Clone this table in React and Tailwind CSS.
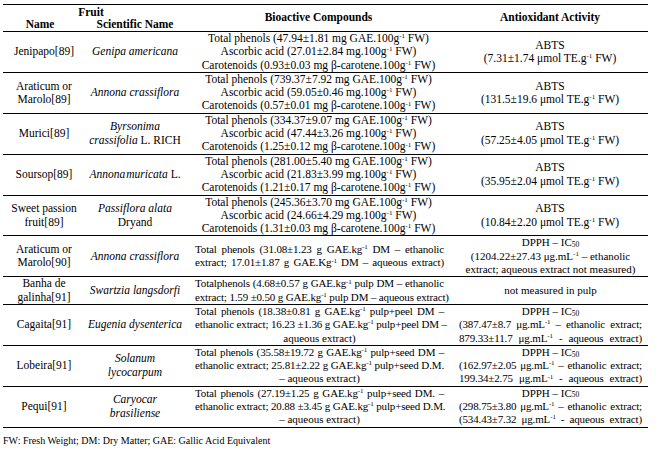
import React from 'react';

// superscript / subscript helpers
const Sup = ({ children = '-1' }) => <sup className="text-[7px] top-[-0.55em]">{children}</sup>;
const Ic = () => (
  <>
    DPPH – IC<sub className="text-[7.5px] bottom-[-0.1em]">50</sub>
  </>
);

// centred lines (rows 1-5)
const phenolRows = [
  {
    name: ['Jenipapo[89]'],
    sci: [<i key="a">Genipa americana</i>],
    tp: '47.94±1.81',
    aa: '27.01±2.84',
    car: '0.93±0.03',
    abts: '(7.31±1.74',
  },
  {
    name: ['Araticum or', 'Marolo[89]'],
    sci: [<i key="a">Annona crassiflora</i>],
    tp: '739.37±7.92',
    aa: '59.05±0.46',
    car: '0.57±0.01',
    abts: '(131.5±19.6',
  },
  {
    name: ['Murici[89]'],
    sci: [
      <i key="a">Byrsonima</i>,
      <span key="b">
        <i>crassifolia</i> L. RICH
      </span>,
    ],
    tp: '334.37±9.07',
    aa: '47.44±3.26',
    car: '1.25±0.12',
    abts: '(57.25±4.05',
  },
  {
    name: ['Soursop[89]'],
    sci: [
      <span key="a">
        <i>Annona</i>
        <i className="ml-[1px]">muricata</i> L.
      </span>,
    ],
    tp: '281.00±5.40',
    aa: '21.83±3.99',
    car: '1.21±0.17',
    abts: '(35.95±2.04',
  },
  {
    name: ['Sweet passion', 'fruit[89]'],
    sci: [<i key="a">Passiflora alata</i>, 'Dryand'],
    tp: '245.36±3.70',
    aa: '24.66±4.29',
    car: '1.31±0.03',
    abts: '(10.84±2.20',
  },
];

// justified rows (6-10); each line: [text, full?]
const extractRows = [
  {
    name: ['Araticum or', 'Marolo[90]'],
    sci: [<i key="a">Annona crassiflora</i>],
    bio: [
      [<>Total phenols (31.08±1.23 g GAE.kg<Sup /> DM – ethanolic</>, true],
      [<>extract; 17.01±1.87 g GAE.Kg<Sup /> DM – aqueous extract)</>, true],
    ],
    anti: [
      [<Ic />, false],
      [<>(1204.22±27.43 μg.mL<Sup /> – ethanolic</>, false],
      [<>extract; aqueous extract not measured)</>, false],
    ],
  },
  {
    name: ['Banha de', 'galinha[91]'],
    sci: [<i key="a">Swartzia langsdorfi</i>],
    bio: [
      [<>Totalphenols (4.68±0.57 g GAE.kg<Sup /> pulp DM – ethanolic</>, true],
      [<>extract; 1.59 ±0.50 g GAE.kg<Sup /> pulp DM – aqueous extract)</>, true],
    ],
    anti: [[<>not measured in pulp</>, false]],
  },
  {
    name: ['Cagaita[91]'],
    sci: [<i key="a">Eugenia dysenterica</i>],
    bio: [
      [<>Total phenols (18.38±0.81 g GAE.kg<Sup /> pulp+peel DM –</>, true],
      [<>ethanolic extract; 16.23 ±1.36 g GAE.kg<Sup /> pulp+peel DM –</>, true],
      [<>aqueous extract)</>, false],
    ],
    anti: [
      [<Ic />, false],
      [<>(387.47±8.7 μg.mL<Sup /> – ethanolic extract;</>, true],
      [<>879.33±11.7 μg.mL<Sup /> - aqueous extract)</>, true],
    ],
  },
  {
    name: ['Lobeira[91]'],
    sci: [<i key="a">Solanum</i>, <i key="b">lycocarpum</i>],
    bio: [
      [<>Total phenols (35.58±19.72 g GAE.kg<Sup /> pulp+seed DM –</>, true],
      [<>ethanolic extract; 25.81±2.22 g GAE.kg<Sup /> pulp+seed D.M.</>, true],
      [<>– aqueous extract)</>, false],
    ],
    anti: [
      [<Ic />, false],
      [<>(162.97±2.05 μg.mL<Sup /> – ethanolic extract;</>, true],
      [<>199.34±2.75 μg.mL<Sup /> - aqueous extract)</>, true],
    ],
  },
  {
    name: ['Pequi[91]'],
    sci: [<i key="a">Caryocar</i>, <i key="b">brasiliense</i>],
    bio: [
      [<>Total phenols (27.19±1.25 g GAE.kg<Sup /> pulp+seed DM. –</>, true],
      [<>ethanolic extract; 20.88 ±3.45 g GAE.kg<Sup /> pulp+seed D.M.</>, true],
      [<>– aqueous extract)</>, false],
    ],
    anti: [
      [<Ic />, false],
      [<>(298.75±3.80 μg.mL<Sup /> – ethanolic extract;</>, true],
      [<>(534.43±7.32 μg.mL<Sup /> - aqueous extract)</>, true],
    ],
  },
];

const Lines = ({ lines }) => lines.map((l, i) => <div key={i}>{l}</div>);

const JLines = ({ lines }) =>
  lines.map(([l, full], i) => (
    <div
      key={i}
      className={
        full
          ? 'whitespace-nowrap text-justify [text-align-last:justify] text-[11px] tracking-[-0.15px]'
          : 'whitespace-nowrap text-center text-[11px]'
      }
    >
      {l}
    </div>
  ));

export default function App() {
  return (
    <div className="w-[660px] h-[451px] bg-white text-black font-['Liberation_Serif',serif] overflow-hidden">
      <div className="pt-[3.5px] pl-[3px]">
        <table className="w-[645px] table-fixed text-[11.5px] leading-[13.3px]">
          <colgroup>
            <col className="w-[82px]" />
            <col className="w-[100px]" />
            <col className="w-[267px]" />
            <col className="w-[196px]" />
          </colgroup>
          <thead className="font-bold">
            <tr className="border-t-[1.5px] border-black">
              <th colSpan={2} className="text-center font-bold leading-[12.5px] pt-[1px] pr-[6px]">
                Fruit
              </th>
              <th rowSpan={2} className="text-center align-middle font-bold">
                Bioactive Compounds
              </th>
              <th rowSpan={2} className="text-center align-middle font-bold">
                Antioxidant Activity
              </th>
            </tr>
            <tr className="border-b border-black">
              <th className="text-center font-bold leading-[13px] pr-[8px]">Name</th>
              <th className="text-center font-bold leading-[13px]">Scientific Name</th>
            </tr>
          </thead>
          <tbody>
            {phenolRows.map((r, i) => (
              <tr key={i} className="border-b border-black">
                <td className="text-center align-middle">
                  <Lines lines={r.name} />
                </td>
                <td className="text-center align-middle">
                  <Lines lines={r.sci} />
                </td>
                <td className="text-center align-middle">
                  <div>
                    Total phenols ({r.tp} mg GAE.100g<Sup /> FW)
                  </div>
                  <div>
                    Ascorbic acid ({r.aa} mg.100g<Sup /> FW)
                  </div>
                  <div>
                    Carotenoids ({r.car} mg β-carotene.100g<Sup /> FW)
                  </div>
                </td>
                <td className="text-center align-middle">
                  <div>ABTS</div>
                  <div>
                    {r.abts} μmol TE.g<Sup /> FW)
                  </div>
                </td>
              </tr>
            ))}
            {extractRows.map((r, i) => (
              <tr
                key={i}
                className={
                  i === extractRows.length - 1
                    ? 'border-b-[1.5px] border-black'
                    : 'border-b border-black'
                }
              >
                <td className="text-center align-middle">
                  <Lines lines={r.name} />
                </td>
                <td className="text-center align-middle">
                  <Lines lines={r.sci} />
                </td>
                <td className="align-middle pl-[10px] pr-[8px]">
                  <JLines lines={r.bio} />
                </td>
                <td className="align-middle pl-[7px] pr-[6px]">
                  <JLines lines={r.anti} />
                </td>
              </tr>
            ))}
          </tbody>
        </table>
        <p className="mt-[7px] text-[10px] leading-[12px]">
          FW: Fresh Weight; DM: Dry Matter; GAE: Gallic Acid Equivalent
        </p>
      </div>
    </div>
  );
}
